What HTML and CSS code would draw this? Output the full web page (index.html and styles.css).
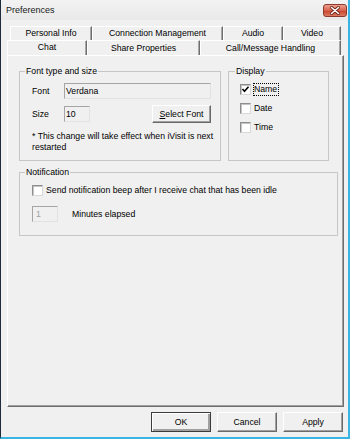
FILE: index.html
```html
<!DOCTYPE html>
<html lang="en">
<head>
    <meta charset="UTF-8">
    <title>Preferences</title>
    <link rel="stylesheet" href="styles.css">
</head>
<body>
    <div class="window">
        <div class="titlebar">
            <span class="title">Preferences</span>
            <button class="close-btn">
                <svg width="24" height="13" viewBox="0 0 24 13">
                    <path d="M8.5 3.5 L15.5 9.5 M15.5 3.5 L8.5 9.5" stroke="#6b1d12" stroke-width="3" stroke-linecap="round"/>
                    <path d="M8.5 3.5 L15.5 9.5 M15.5 3.5 L8.5 9.5" stroke="#fff" stroke-width="1.6" stroke-linecap="round"/>
                </svg>
            </button>
        </div>

        <div class="client">
            <div class="tabs">
                <div class="tab-row back">
                    <div class="tab tab-personal">Personal Info</div>
                    <div class="tab tab-connection">Connection Management</div>
                    <div class="tab tab-audio">Audio</div>
                    <div class="tab tab-video">Video</div>
                </div>
                <div class="tab-row front">
                    <div class="tab tab-chat selected">Chat</div>
                    <div class="tab tab-share">Share Properties</div>
                    <div class="tab tab-call">Call/Message Handling</div>
                </div>
            </div>

            <div class="panel">
                <div class="top-groups">
                    <fieldset class="group font-group">
                        <legend>Font type and size</legend>
                        <div class="field-row">
                            <span class="field-label">Font</span>
                            <span class="textbox font-name">Verdana</span>
                        </div>
                        <div class="field-row size-row">
                            <span class="field-label">Size</span>
                            <span class="textbox font-size">10</span>
                            <button class="btn select-font"><u>S</u>elect Font</button>
                        </div>
                        <p class="note">* This change will take effect when iVisit is next<br>restarted</p>
                    </fieldset>

                    <fieldset class="group display-group">
                        <legend>Display</legend>
                        <div class="check-list">
                            <div class="check-row">
                                <span class="checkbox">
                                    <svg width="9" height="9" viewBox="0 0 9 9"><path d="M1.5 4 L3.5 6.3 L7.5 1.8" fill="none" stroke="#000" stroke-width="1.6"/></svg>
                                </span>
                                <span class="check-text focused">Name</span>
                            </div>
                            <div class="check-row">
                                <span class="checkbox"></span>
                                <span class="check-text">Date</span>
                            </div>
                            <div class="check-row">
                                <span class="checkbox"></span>
                                <span class="check-text">Time</span>
                            </div>
                        </div>
                    </fieldset>
                </div>

                <fieldset class="group notif-group">
                    <legend>Notification</legend>
                    <div class="check-row">
                        <span class="checkbox notif-check"></span>
                        <span>Send notification beep after I receive chat that has been idle</span>
                    </div>
                    <div class="field-row minutes-row">
                        <span class="textbox minutes-box">1</span>
                        <span class="minutes-label">Minutes elapsed</span>
                    </div>
                </fieldset>
            </div>

            <div class="dialog-buttons">
                <button class="btn dlg default">OK</button>
                <button class="btn dlg">Cancel</button>
                <button class="btn dlg">Apply</button>
            </div>
        </div>
    </div>
</body>
</html>
```

FILE: styles.css
```css
body {
    margin: 0;
    background-color: #f0f0f0;
}

.window {
    width: 350px;
    height: 439px;
    box-sizing: border-box;
    display: flex;
    flex-direction: column;
    background-color: #f0f0f0;
    border-left: 1px solid #1d2b3b;
    border-right: 2px solid #3ab4e2;
    border-bottom: 2px solid #3ab4e2;
    font-family: "Liberation Sans", Arial, sans-serif;
    font-size: 8.7px;
    line-height: 11px;
    color: #000;
}

.titlebar {
    height: 20px;
    flex: none;
    display: flex;
    align-items: center;
    justify-content: space-between;
    padding-left: 5px;
    box-sizing: border-box;
    background: linear-gradient(#f3f3f3, #e9e9e9);
}

.title {
    font-size: 9px;
    color: #1a1a1a;
}

.close-btn {
    width: 24px;
    height: 13px;
    margin-right: 1px;
    padding: 0;
    border: 1px solid #8c3a2e;
    border-radius: 3px;
    background: linear-gradient(#eba08f, #d8624d 50%, #c7422c 51%, #dc7a62);
    display: flex;
    align-items: center;
    justify-content: center;
    overflow: hidden;
}

.close-btn svg {
    display: block;
    flex: none;
}

.client {
    flex: 1;
    display: flex;
    flex-direction: column;
    padding: 6px 4px 5px 6px;
}

/* tabs */

.tab-row {
    display: flex;
}

.tab-row.back {
    height: 14px;
    margin-left: 3px;
}

.tab-row.front {
    height: 15px;
}

.tab {
    box-sizing: border-box;
    display: flex;
    align-items: center;
    justify-content: center;
    border-top: 1px solid #fff;
    border-left: 1px solid #fff;
    border-right: 1px solid #6e6e6e;
    box-shadow: inset -1px 0 #a8a8a8;
    white-space: nowrap;
}

.tab-personal { width: 82px; }
.tab-connection { width: 131px; }
.tab-audio { width: 60px; }
.tab-video { width: 58px; }
.tab-chat { width: 80px; }
.tab-share { width: 113px; }
.tab-call { width: 141px; }

.tab.selected {
    padding-bottom: 1px;
}

/* panel */

.panel {
    flex: 1;
    border-top: 1px solid #fff;
    border-left: 1px solid #fff;
    border-right: 1px solid #6e6e6e;
    border-bottom: 1px solid #6e6e6e;
    box-shadow: inset -1px -1px #a0a0a0;
    padding: 10px 0 0 11px;
}

.top-groups {
    display: grid;
    grid-template-columns: 202px 101px;
    column-gap: 7px;
}

.group {
    margin: 0;
    min-width: 0;
    box-sizing: border-box;
    border: 1px solid #c6c6c6;
}

.group legend {
    padding: 0 1px;
    margin-left: -7px;
    line-height: 11px;
}

.font-group {
    padding: 6px 9px 7px 12px;
}

.display-group {
    padding: 6px 4px 0 11px;
}

.display-group legend {
    margin-left: -5px;
}

.field-row {
    display: flex;
    align-items: center;
    height: 16px;
}

.field-label {
    width: 32px;
}

.textbox {
    box-sizing: border-box;
    height: 16px;
    display: flex;
    align-items: center;
    padding-left: 1px;
    border: 1px solid;
    border-color: #a5a5a5 #e2e2e2 #e2e2e2 #a5a5a5;
    background-color: #f0f0f0;
}

.font-name {
    width: 147px;
}

.font-size {
    width: 26px;
}

.size-row {
    height: 18px;
    margin-top: 6px;
}

.btn {
    box-sizing: border-box;
    padding: 0;
    font: inherit;
    color: #000;
    background-color: #f0f0f0;
    border: 1px solid;
    border-color: #fff #6a6a6a #6a6a6a #fff;
    box-shadow: inset -1px -1px #a0a0a0;
}

.select-font {
    width: 59px;
    height: 18px;
    margin-left: auto;
}

.note {
    margin: 8px 0 0;
    white-space: nowrap;
}

/* checkboxes */

.check-list {
    display: flex;
    flex-direction: column;
    gap: 6px;
}

.check-row {
    display: flex;
    align-items: center;
    height: 13px;
    white-space: nowrap;
}

.checkbox {
    width: 11px;
    height: 11px;
    box-sizing: border-box;
    flex: none;
    margin-right: 2px;
    display: flex;
    align-items: center;
    justify-content: center;
    background-color: #fff;
    border: 1px solid;
    border-color: #8e8e8e #d8d8d8 #d8d8d8 #8e8e8e;
    box-shadow: inset 1px 1px #c4c4c4;
}

.checkbox svg {
    display: block;
}

.check-text {
    border: 1px dotted transparent;
    padding-right: 1px;
}

.check-text.focused {
    border-color: #000;
}

.notif-group {
    width: 319px;
    margin-top: 6px;
    padding: 6px 12px 13px 12px;
}

.notif-check {
    margin-right: 3px;
}

.minutes-row {
    margin-top: 9px;
}

.minutes-box {
    width: 26px;
    padding-left: 3px;
    color: #a0a0a0;
}

.minutes-label {
    margin-left: 14px;
}

/* dialog buttons */

.dialog-buttons {
    display: flex;
    justify-content: flex-end;
    gap: 6px;
    margin-top: 5px;
    padding-right: 1px;
}

.dlg {
    width: 60px;
    height: 20px;
}

.dlg.default {
    border-color: #3c3c3c;
    box-shadow: inset 1px 1px #fff, inset -2px -2px #a0a0a0;
}
```
